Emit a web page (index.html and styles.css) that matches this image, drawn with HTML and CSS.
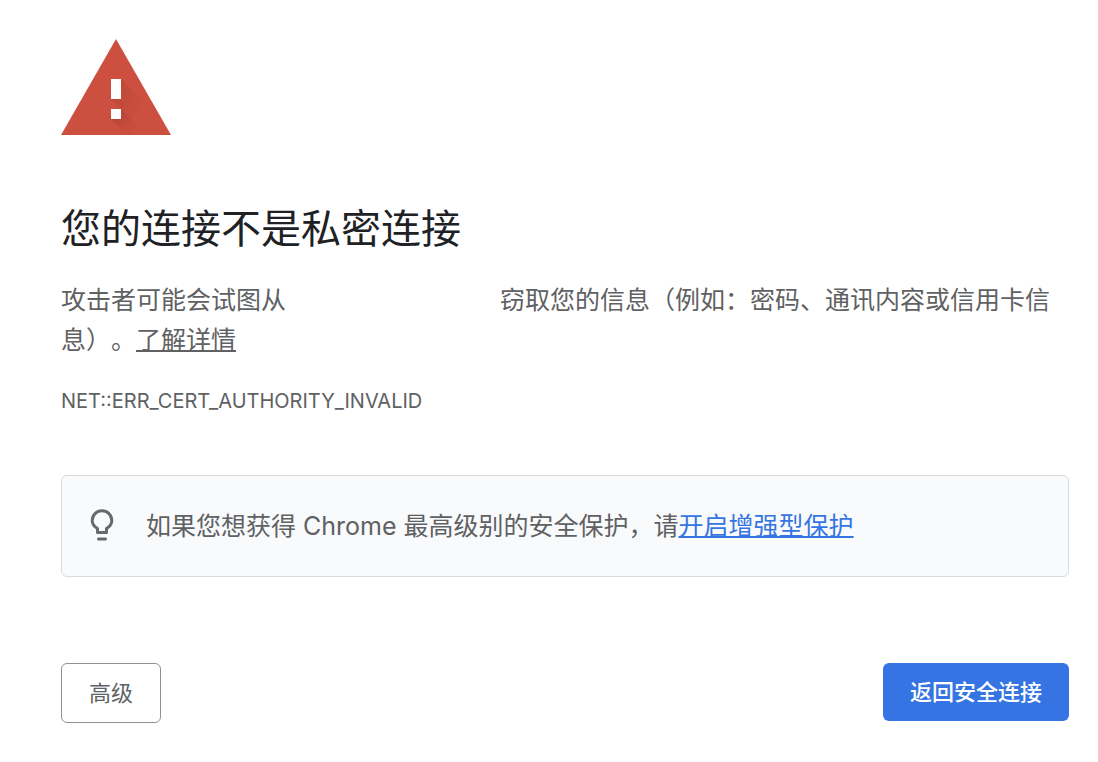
FILE: index.html
```html
<!DOCTYPE html>
<html lang="zh-CN">
<head>
<meta charset="utf-8">
<meta name="viewport" content="width=device-width, initial-scale=1">
<title>隐私设置错误</title>
<link rel="stylesheet" href="styles.css">
</head>
<body>
<main class="warning">
  <svg class="warning-icon" viewBox="0 0 110 96" aria-hidden="true">
    <defs>
      <linearGradient id="cast" x1="0" y1="0" x2="1" y2="1">
        <stop offset="0" stop-color="#9c3a2e" stop-opacity=".6"/>
        <stop offset=".75" stop-color="#9c3a2e" stop-opacity="0"/>
      </linearGradient>
    </defs>
    <path d="M55 0 110 96H0z" fill="#cd4f3f"/>
    <path d="M60 40 84 64 84 94 50 60z" fill="url(#cast)" opacity=".7"/>
    <path d="M60 70 86 96H66L50 80z" fill="url(#cast)"/>
    <path d="M50 40h10v20H50zM50 70h10v10H50z" fill="#fff"/>
  </svg>
  <h1 class="title">您的连接不是私密连接</h1>
  <p class="message">攻击者可能会试图从<span class="host"></span>窃取您的信息（例如：密码、通讯内容或信用卡信息）。<a class="more" href="#">了解详情</a></p>
  <p class="code">NET::ERR_CERT_AUTHORITY_INVALID</p>
  <section class="tip">
    <svg class="bulb" viewBox="0 0 24 34" aria-hidden="true">
      <path d="M7.500 23.500V19.500C4 17.500 2.200 15 2.200 11.500a9.800 9.800 0 0 1 19.600 0c0 3.500-1.800 6-5.300 8v4z" fill="none" stroke="#68696b" stroke-width="3" stroke-linejoin="round"/>
      <path d="M8.500 30h7" stroke="#68696b" stroke-width="3" stroke-linecap="round"/>
    </svg>
    <p class="tip-text">如果您想获得 Chrome 最高级别的安全保护，请<a class="enable" href="#">开启增强型保护</a></p>
  </section>
  <div class="actions">
    <button class="button button-plain" type="button">高级</button>
    <button class="button button-primary" type="button">返回安全连接</button>
  </div>
</main>
</body>
</html>
```
FILE: styles.css
```css
* {
  box-sizing: border-box;
}

body {
  margin: 0;
  background: #fff;
  color: #606163;
  font-family: Inter, "Noto Sans CJK SC", sans-serif;
  text-spacing-trim: space-all;
}

.warning {
  padding: 39px 29px 38px 61px;
}

.warning-icon {
  display: block;
  width: 110px;
  height: 96px;
}

.title {
  margin: 64px 0 0;
  color: #202124;
  font-size: 40px;
  font-weight: 400;
  line-height: 60px;
}

.message {
  margin: 21px 0 0;
  font-size: 25px;
  line-height: 40px;
}

.host {
  display: inline-block;
  width: 214px;
}

.more,
.enable {
  text-decoration-thickness: 2px;
}

.more {
  color: inherit;
}

.code {
  margin: 25px 0 0;
  font-size: 20px;
  line-height: 32px;
}

.tip {
  display: flex;
  align-items: center;
  gap: 32px;
  margin-top: 58px;
  padding: 30px 28px;
  border: 1px solid #dadce0;
  border-radius: 6px;
  background: #f8fafc;
}

.bulb {
  flex: none;
  width: 24px;
  height: 34px;
}

.tip-text {
  margin: 0;
  font-size: 25px;
  line-height: 40px;
}

.enable {
  color: #3575e2;
}

.actions {
  display: flex;
  align-items: flex-start;
  justify-content: space-between;
  margin-top: 86px;
}

.button {
  border: 0;
  border-radius: 6px;
  font-family: inherit;
  font-size: 22px;
  font-weight: 500;
  line-height: 32px;
}

.button-plain {
  padding: 13px 27px;
  border: 1px solid #909193;
  background: #fff;
  color: #5f6368;
  font-weight: 400;
}

.button-primary {
  padding: 13px 27px;
  background: #3574e2;
  color: #fff;
}
```
